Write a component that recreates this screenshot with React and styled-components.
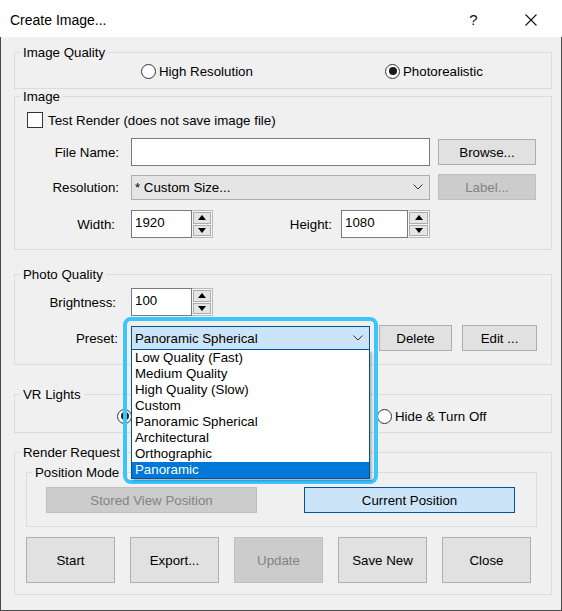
import React from "react";
import styled, { createGlobalStyle } from "styled-components";

const GlobalStyle = createGlobalStyle`
  html, body { margin: 0; padding: 0; background: #ffffff; }
  body {
    font-family: "Liberation Sans", Arial, sans-serif;
    font-size: 13.3px;
    color: #000;
  }
  * { box-sizing: border-box; }
`;

const Window = styled.div`
  width: 562px;
  height: 611px;
  display: flex;
  flex-direction: column;
  background: #f0f0f0;
`;

const TitleBar = styled.div`
  height: 37px;
  flex-shrink: 0;
  background: #ffffff;
  display: flex;
  align-items: center;
  padding: 2px 3px 0 10px;
`;

const Title = styled.div`
  flex: 1;
  font-size: 14px;
  color: #000;
`;

const TitleButton = styled.div`
  width: 57px;
  height: 35px;
  display: flex;
  align-items: center;
  justify-content: center;
  font-size: 15px;
  color: #111;
`;

const Body = styled.div`
  flex: 1;
  border: 1px solid #4a4a4a;
  border-top: none;
  padding: 15px 9px 0 13px;
`;

const Group = styled.div`
  border: 1px solid #dcdcdc;
  height: ${(p) => p.$h}px;
  margin-top: ${(p) => p.$mt || 0}px;
  margin-left: ${(p) => p.$ml || 0}px;
  width: ${(p) => (p.$w ? `${p.$w}px` : "auto")};
`;

const Legend = styled.div`
  position: relative;
  width: fit-content;
  height: 15px;
  line-height: 15px;
  margin: -8px 0 -7px 5px;
  padding: 0 3px;
  background: #f0f0f0;
`;

const Row = styled.div`
  display: flex;
  align-items: center;
  height: ${(p) => p.$h}px;
  margin-top: ${(p) => p.$mt || 0}px;
  padding-left: ${(p) => p.$pl || 0}px;
`;

const FieldLabel = styled.div`
  width: 104px;
  margin-right: 12px;
  text-align: right;
  padding-right: ${(p) => p.$pr || 0}px;
`;

const RadioGrid = styled.div`
  display: grid;
  grid-template-columns: ${(p) => p.$first}px auto;
  align-items: center;
`;

const RadioLabel = styled.label`
  display: flex;
  align-items: center;
  gap: 3px;
  white-space: nowrap;
`;

const RadioCircle = styled.span`
  width: 15px;
  height: 15px;
  border-radius: 50%;
  border: 1px solid #333;
  background: #fff;
  display: inline-flex;
  align-items: center;
  justify-content: center;
  flex-shrink: 0;
  &::after {
    content: "";
    width: 8px;
    height: 8px;
    border-radius: 50%;
    background: #1b1b1b;
    display: ${(p) => (p.$on ? "block" : "none")};
  }
`;

const CheckLabel = styled.label`
  display: flex;
  align-items: center;
  gap: 5px;
`;

const CheckBox = styled.span`
  width: 16px;
  height: 16px;
  border: 1px solid #333;
  background: #fff;
  flex-shrink: 0;
`;

const TextBox = styled.div`
  width: ${(p) => p.$w}px;
  height: 28px;
  border: 1px solid #7a7a7a;
  background: #fff;
  padding: 4px 0 0 3px;
  line-height: 15px;
`;

const Select = styled.div`
  width: ${(p) => p.$w}px;
  height: ${(p) => p.$h || 25}px;
  display: flex;
  align-items: center;
  justify-content: space-between;
  padding: 0 6px 0 3px;
  border: 1px solid ${(p) => (p.$focus ? "#005499" : "#adadad")};
  background: ${(p) => (p.$focus ? "#cce4f7" : "#e5e5e5")};
`;

const Button = styled.div`
  width: ${(p) => p.$w}px;
  height: ${(p) => p.$h || 26}px;
  margin-left: ${(p) => p.$ml || 0}px;
  display: flex;
  align-items: center;
  justify-content: center;
  border: 1px solid
    ${(p) => (p.$active ? "#005499" : p.$disabled ? "#bfbfbf" : "#adadad")};
  background: ${(p) =>
    p.$active ? "#cce4f7" : p.$disabled ? "#cccccc" : "#e1e1e1"};
  color: ${(p) => (p.$disabled ? "#838383" : "#000")};
  flex-shrink: 0;
`;

const Spin = styled.div`
  display: flex;
  height: 28px;
`;

const SpinButtons = styled.div`
  width: ${(p) => p.$w}px;
  height: 28px;
  border: 1px solid #b9b9b9;
  border-left: none;
  background: #f5f5f5;
  display: flex;
  flex-direction: column;
  gap: 1px;
  padding: 1px;
`;

const SpinButton = styled.div`
  flex: 1;
  border: 1px solid #adadad;
  background: #e5e5e5;
  display: flex;
  align-items: center;
  justify-content: center;
`;

const Middle = styled.div`
  flex: 0 0 ${(p) => p.$w}px;
  text-align: right;
  padding-right: 9px;
`;

const ComboWrap = styled.div`
  position: relative;
  width: 239px;
  height: 24px;
`;

const FocusRing = styled.div`
  position: absolute;
  left: -8px;
  right: -8px;
  top: -9px;
  height: 167px;
  border: 4px solid #3cc4fc;
  border-radius: 8px;
  pointer-events: none;
  z-index: 2;
`;

const DropList = styled.div`
  position: absolute;
  left: 0;
  top: 24px;
  width: 239px;
  background: #fff;
  border: 1px solid #005499;
  border-top: none;
  box-shadow: 2px 2px 2px rgba(0, 0, 0, 0.25);
  z-index: 3;
`;

const ListItem = styled.div`
  height: 16px;
  line-height: 16px;
  padding-left: 3px;
  background: ${(p) => (p.$selected ? "#0078d7" : "transparent")};
  color: ${(p) => (p.$selected ? "#fff" : "#000")};
  white-space: nowrap;
`;

const ButtonBar = styled.div`
  display: flex;
  gap: 15px;
  margin: 10px 0 0 11px;
`;

const UpArrow = () => (
  <svg width="8" height="5" viewBox="0 0 8 5">
    <path d="M0 5 L4 0 L8 5 Z" fill="#000" />
  </svg>
);

const DownArrow = () => (
  <svg width="8" height="5" viewBox="0 0 8 5">
    <path d="M0 0 L4 5 L8 0 Z" fill="#000" />
  </svg>
);

const Chevron = () => (
  <svg width="10" height="6" viewBox="0 0 10 6">
    <polyline
      points="0.5,0.5 5,5 9.5,0.5"
      fill="none"
      stroke="#333"
      strokeWidth="1"
    />
  </svg>
);

const CloseIcon = () => (
  <svg width="12" height="12" viewBox="0 0 12 12">
    <path d="M0.5 0.5 L11.5 11.5 M11.5 0.5 L0.5 11.5" stroke="#111" strokeWidth="1.1" />
  </svg>
);

const SpinBox = ({ value, w, bw }) => (
  <Spin>
    <TextBox $w={w}>{value}</TextBox>
    <SpinButtons $w={bw}>
      <SpinButton>
        <UpArrow />
      </SpinButton>
      <SpinButton>
        <DownArrow />
      </SpinButton>
    </SpinButtons>
  </Spin>
);

const presets = [
  "Low Quality (Fast)",
  "Medium Quality",
  "High Quality (Slow)",
  "Custom",
  "Panoramic Spherical",
  "Architectural",
  "Orthographic",
  "Panoramic",
];

export default function App() {
  return (
    <>
      <GlobalStyle />
      <Window>
        <TitleBar>
          <Title>Create Image...</Title>
          <TitleButton>?</TitleButton>
          <TitleButton>
            <CloseIcon />
          </TitleButton>
        </TitleBar>
        <Body>
          <Group $h={37}>
            <Legend>Image Quality</Legend>
            <Row $h={16} $mt={10} $pl={126}>
              <RadioGrid $first={244}>
                <RadioLabel>
                  <RadioCircle />
                  High Resolution
                </RadioLabel>
                <RadioLabel>
                  <RadioCircle $on />
                  Photorealistic
                </RadioLabel>
              </RadioGrid>
            </Row>
          </Group>

          <Group $h={154} $mt={7}>
            <Legend>Image</Legend>
            <Row $h={16} $mt={15} $pl={12}>
              <CheckLabel>
                <CheckBox />
                Test Render (does not save image file)
              </CheckLabel>
            </Row>
            <Row $h={28} $mt={10}>
              <FieldLabel>File Name:</FieldLabel>
              <TextBox $w={299} />
              <Button $w={98} $ml={8}>
                Browse...
              </Button>
            </Row>
            <Row $h={26} $mt={8}>
              <FieldLabel>Resolution:</FieldLabel>
              <Select $w={299}>
                <span>* Custom Size...</span>
                <Chevron />
              </Select>
              <Button $w={98} $ml={8} $disabled>
                Label...
              </Button>
            </Row>
            <Row $h={28} $mt={10}>
              <FieldLabel $pr={4}>Width:</FieldLabel>
              <SpinBox value="1920" w={61} bw={21} />
              <Middle $w={128}>Height:</Middle>
              <SpinBox value="1080" w={67} bw={22} />
            </Row>
          </Group>

          <Group $h={91} $mt={24}>
            <Legend>Photo Quality</Legend>
            <Row $h={28} $mt={13}>
              <FieldLabel $pr={3}>Brightness:</FieldLabel>
              <SpinBox value="100" w={61} bw={21} />
            </Row>
            <Row $h={26} $mt={9}>
              <FieldLabel $pr={1}>Preset:</FieldLabel>
              <ComboWrap>
                <Select $w={239} $h={24} $focus>
                  <span>Panoramic Spherical</span>
                  <Chevron />
                </Select>
                <DropList>
                  {presets.map((p) => (
                    <ListItem key={p} $selected={p === "Panoramic"}>
                      {p}
                    </ListItem>
                  ))}
                </DropList>
                <FocusRing />
              </ComboWrap>
              <Button $w={73} $ml={9}>
                Delete
              </Button>
              <Button $w={75} $ml={10}>
                Edit ...
              </Button>
            </Row>
          </Group>

          <Group $h={39} $mt={29}>
            <Legend>VR Lights</Legend>
            <Row $h={16} $mt={13} $pl={102}>
              <RadioGrid $first={260}>
                <RadioLabel>
                  <RadioCircle $on />
                </RadioLabel>
                <RadioLabel>
                  <RadioCircle />
                  Hide &amp; Turn Off
                </RadioLabel>
              </RadioGrid>
            </Row>
          </Group>

          <Group $h={143} $mt={19}>
            <Legend>Render Request</Legend>
            <Group $h={55} $mt={19} $ml={11} $w={511}>
              <Legend>Position Mode</Legend>
              <Row $h={26} $mt={14} $pl={19}>
                <Button $w={211} $disabled>
                  Stored View Position
                </Button>
                <Button $w={211} $ml={47} $active>
                  Current Position
                </Button>
              </Row>
            </Group>
            <ButtonBar>
              <Button $w={89} $h={46}>Start</Button>
              <Button $w={89} $h={46}>Export...</Button>
              <Button $w={89} $h={46} $disabled>Update</Button>
              <Button $w={89} $h={46}>Save New</Button>
              <Button $w={89} $h={46}>Close</Button>
            </ButtonBar>
          </Group>
        </Body>
      </Window>
    </>
  );
}
